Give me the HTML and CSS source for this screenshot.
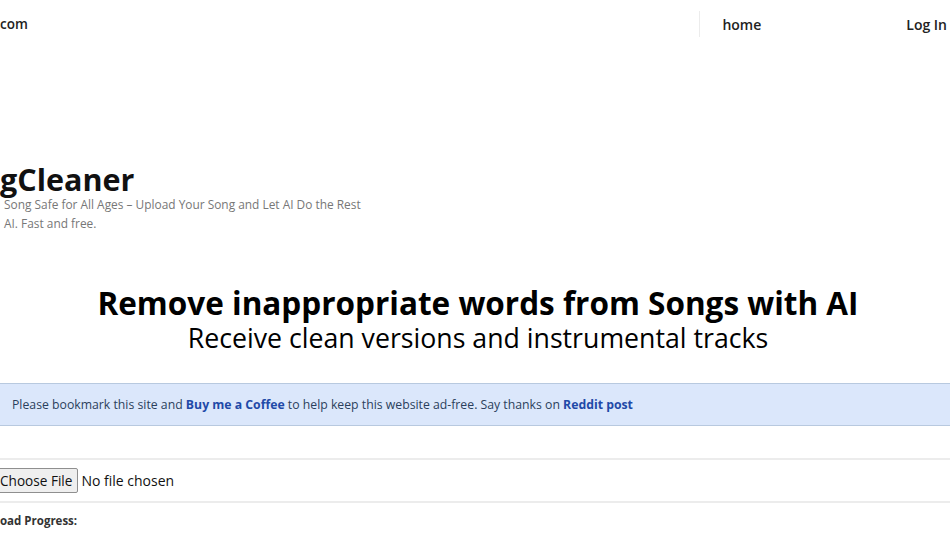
FILE: index.html
```html
<!DOCTYPE html>
<html lang="en">
<head>
<meta charset="utf-8">
<title>SongCleaner</title>
<link rel="stylesheet" href="styles.css">
</head>
<body>
<header class="nav">
  <a class="brand" href="#">com</a>
  <div class="nav-links">
    <span class="divider"></span>
    <a class="nav-link home" href="#">home</a>
    <a class="nav-link" href="#">Log In</a>
  </div>
</header>

<section class="intro">
  <h1 class="site-title">gCleaner</h1>
  <p class="tagline">Song Safe for All Ages – Upload Your Song and Let AI Do the Rest</p>
  <p class="tagline">AI. Fast and free.</p>
</section>

<section class="hero">
  <h2 class="hero-title">Remove inappropriate words from Songs with AI</h2>
  <p class="hero-sub">Receive clean versions and instrumental tracks</p>
</section>

<div class="alert">
  <span>Please bookmark this site and <a href="#">Buy me a Coffee</a> to help keep this website ad-free. Say thanks on <a href="#">Reddit post</a></span>
</div>

<div class="upload">
  <div class="file-row">
    <span class="file-btn">Choose File</span>
    <span class="file-name">No file chosen</span>
  </div>
  <div class="progress-label">oad Progress:</div>
</div>
</body>
</html>
```

FILE: styles.css
```css
* { box-sizing: border-box; }
html, body { margin: 0; padding: 0; }
body {
  font-family: "Open Sans", "Noto Sans", sans-serif;
  color: #111;
  background: #fff;
  overflow: hidden;
}
a { text-decoration: none; color: inherit; }

.nav {
  display: flex;
  justify-content: space-between;
  align-items: center;
  height: 48px;
  padding: 0 3px 0 0;
}
.brand {
  font-size: 13.5px;
  font-weight: 600;
  color: #222;
}
.nav-links {
  display: flex;
  align-items: center;
}
.divider {
  width: 1px;
  height: 26px;
  background: #ececec;
  margin-right: 22px;
}
.nav-link {
  font-size: 14px;
  font-weight: 600;
  color: #222;
}
.home { margin-right: 145px; }

.intro {
  padding-top: 115px;
}
.site-title {
  margin: 0;
  font-size: 30.5px;
  font-weight: 700;
  line-height: 32px;
  color: #111;
}
.tagline {
  margin: 0 0 0 4px;
  font-size: 11.9px;
  line-height: 19px;
  color: #777;
  font-weight: 400;
}

.hero {
  text-align: center;
  padding-top: 51px;
  padding-left: 6px;
}
.hero-title {
  margin: 0;
  font-size: 31.5px;
  line-height: 38px;
  font-weight: 700;
  color: #000;
}
.hero-sub {
  margin: 0;
  font-size: 26.7px;
  line-height: 32px;
  color: #000;
}

.alert {
  margin-top: 29px;
  height: 43px;
  display: flex;
  align-items: center;
  padding-left: 12px;
  background: #dbe7fb;
  border-top: 1px solid #b8c9df;
  border-bottom: 1px solid #b8c9df;
  font-size: 12.25px;
  color: #2b3f5c;
}
.alert a {
  font-weight: 700;
  color: #1f4aa8;
}

.upload {
  margin-top: 32px;
}
.file-row {
  display: flex;
  align-items: center;
  border-top: 2px solid #ececec;
  border-bottom: 2px solid #ececec;
  height: 45px;
}
.file-btn {
  margin-left: -6px;
  font-size: 13.6px;
  padding: 2px 5px;
  height: 25px;
  display: flex;
  align-items: center;
  background: #efefef;
  border: 1px solid #8f8f8f;
  border-radius: 2px;
  color: #111;
}
.file-name {
  margin-left: 3px;
  font-size: 14px;
  color: #111;
}
.progress-label {
  font-size: 11.5px;
  font-weight: 700;
  color: #333;
  margin-top: 10px;
}
```
